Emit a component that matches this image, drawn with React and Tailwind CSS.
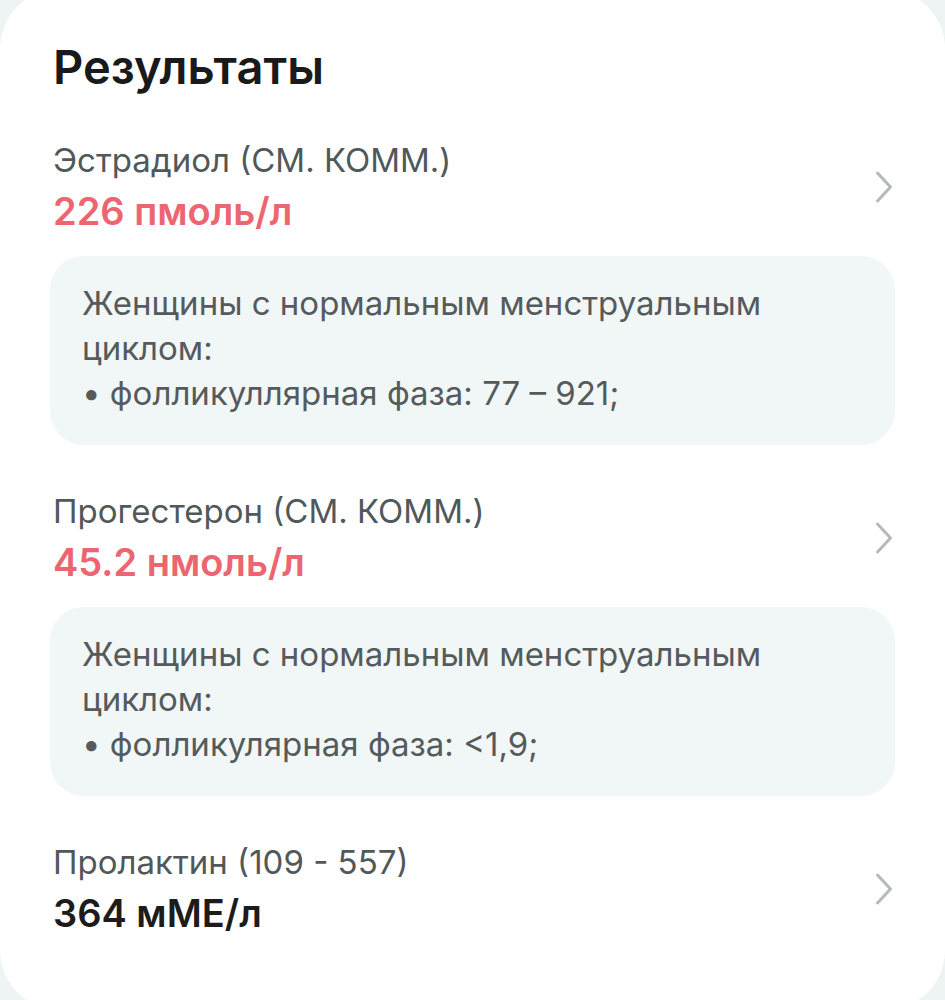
const results = [
  {
    name: 'Эстрадиол (СМ. КОММ.)',
    value: '226 пмоль/л',
    flagged: true,
    note: ['Женщины с нормальным менструальным', 'циклом:', '• фолликуллярная фаза: 77 – 921;'],
  },
  {
    name: 'Прогестерон (СМ. КОММ.)',
    value: '45.2 нмоль/л',
    flagged: true,
    note: ['Женщины с нормальным менструальным', 'циклом:', '• фолликулярная фаза: <1,9;'],
  },
  {
    name: 'Пролактин (109 - 557)',
    value: '364 мМЕ/л',
    flagged: false,
  },
];

function Chevron() {
  return (
    <svg width="20" height="34" viewBox="0 0 20 34" fill="none" className="shrink-0">
      <path d="M3.5 3 L16.5 17 L3.5 31" stroke="#b4b9bb" strokeWidth="3" strokeLinecap="round" strokeLinejoin="round" />
    </svg>
  );
}

function ResultRow({ item }) {
  return (
    <div>
      <div className="flex items-center justify-between pl-[3px] pr-[1px]">
        <div>
          <p className="text-[33px] leading-[40px] text-[#51585a]">{item.name}</p>
          <p className={`mt-[9px] text-[38px] leading-[44px] font-semibold ${item.flagged ? 'text-[#ec6672]' : 'text-[#1c1c1c]'}`}>
            {item.value}
          </p>
        </div>
        <Chevron />
      </div>
      {item.note && (
        <div className="mt-[23px] rounded-[34px] bg-[#f1f6f6] px-[32px] pt-[25px] pb-[29px]">
          {item.note.map((line, i) => (
            <p key={i} className="text-[33px] leading-[45px] text-[#555b5c]">{line}</p>
          ))}
        </div>
      )}
    </div>
  );
}

export default function App() {
  return (
    <div className="h-[1000px] overflow-hidden bg-[#eef4f4] font-['Inter','Noto_Sans',sans-serif]">
      <div className="-mt-[11px] h-[1021px] rounded-[60px] bg-white px-[50px] pt-[50px]">
        <h1 className="pl-[3px] text-[47px] leading-[56px] font-semibold text-[#1a1a1a]">Результаты</h1>
        <div className="mt-[45px] flex flex-col gap-[46px]">
          {results.map((r) => (
            <ResultRow key={r.name} item={r} />
          ))}
        </div>
      </div>
    </div>
  );
}
